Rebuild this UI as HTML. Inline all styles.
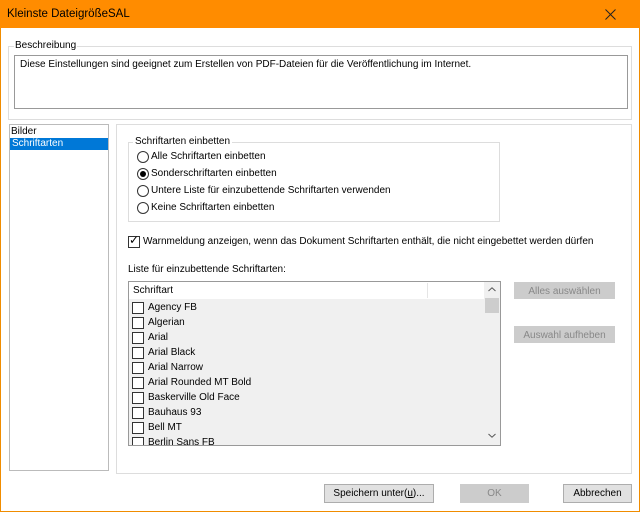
<!DOCTYPE html><html><head><style>
*{margin:0;padding:0;box-sizing:border-box}
body{width:640px;height:512px;position:relative;background:#fff;font-family:"Liberation Sans",sans-serif;font-size:10px;color:#000;overflow:hidden}
.a{position:absolute;white-space:nowrap}
.btn{position:absolute;border:1px solid #adadad;background:#e1e1e1;text-align:center;line-height:17px}
.dis{border-color:#ccc;background:#ccc;color:#888}
.rad{position:absolute;width:12px;height:12px;border:1px solid #333;border-radius:50%;background:#fff}
.cb{position:absolute;width:12px;height:12px;border:1px solid #333;background:#fff}
</style></head><body>
<div class="a" style="left:0;top:0;width:640px;height:512px;border:1px solid #f08c00"></div>
<div class="a" style="left:0;top:0;width:640px;height:28px;background:#ff8c00"></div>
<div class="a" style="left:7px;top:8px;font-size:11.5px">Kleinste DateigrößeSAL</div>
<svg class="a" style="left:605px;top:9px" width="11" height="11"><path d="M0.5 0.5L10.5 10.5M10.5 0.5L0.5 10.5" stroke="#222" stroke-width="1"/></svg>

<div class="a" style="left:8px;top:46px;width:624px;height:74px;border:1px solid #ddd"></div>
<div class="a" style="left:14px;top:40px;background:#fff;padding:0 1px">Beschreibung</div>
<div class="a" style="left:14px;top:55px;width:614px;height:54px;border:1px solid #999;padding:3px 5px">Diese Einstellungen sind geeignet zum Erstellen von PDF-Dateien für die Veröffentlichung im Internet.</div>

<div class="a" style="left:9px;top:124px;width:100px;height:347px;border:1px solid #bbb"></div>
<div class="a" style="left:11px;top:126px">Bilder</div>
<div class="a" style="left:10px;top:138px;width:98px;height:12px;background:#0078d7;color:#fff;padding-left:2px;line-height:12px">Schriftarten</div>

<div class="a" style="left:116px;top:124px;width:516px;height:350px;border:1px solid #ddd"></div>
<div class="a" style="left:128px;top:142px;width:372px;height:80px;border:1px solid #ddd"></div>
<div class="a" style="left:133px;top:136px;background:#fff;padding:0 2px">Schriftarten einbetten</div>
<div class="rad" style="left:137px;top:151px"></div><div class="a" style="left:151px;top:151px">Alle Schriftarten einbetten</div>
<div class="rad" style="left:137px;top:168px"></div><div class="a" style="left:140px;top:171px;width:6px;height:6px;border-radius:50%;background:#000"></div><div class="a" style="left:151px;top:168px">Sonderschriftarten einbetten</div>
<div class="rad" style="left:137px;top:185px"></div><div class="a" style="left:151px;top:185px">Untere Liste für einzubettende Schriftarten verwenden</div>
<div class="rad" style="left:137px;top:202px"></div><div class="a" style="left:151px;top:202px">Keine Schriftarten einbetten</div>

<div class="cb" style="left:128px;top:236px"></div><div class="a" style="left:129px;top:233px;font-size:12px">✓</div>
<div class="a" style="left:143px;top:236px">Warnmeldung anzeigen, wenn das Dokument Schriftarten enthält, die nicht eingebettet werden dürfen</div>
<div class="a" style="left:128px;top:264px">Liste für einzubettende Schriftarten:</div>

<div class="a" style="left:128px;top:281px;width:373px;height:165px;border:1px solid #999;background:#f0f0f0;overflow:hidden">
<div class="a" style="left:0;top:0;width:355px;height:17px;background:#fff"></div>
<div class="a" style="left:298px;top:1px;width:1px;height:15px;background:#e5e5e5"></div>
<div class="a" style="left:4px;top:3px">Schriftart</div>
<div class="a" style="left:355px;top:0;width:17px;height:163px;background:#f0f0f0"></div>
<div class="a" style="left:356px;top:16px;width:14px;height:15px;background:#cdcdcd"></div>
<svg class="a" style="left:359px;top:5px" width="8" height="5"><path d="M0.5 4L4 0.8L7.5 4" fill="none" stroke="#555"/></svg>
<svg class="a" style="left:359px;top:151px" width="8" height="5"><path d="M0.5 1L4 4.2L7.5 1" fill="none" stroke="#555"/></svg>
</div>
<div class="a" style="left:129px;top:301px;width:350px">
<div style="position:relative;height:150px">
<div class="cb" style="left:3px;top:1px"></div><div class="a" style="left:19px;top:1px">Agency FB</div>
<div class="cb" style="left:3px;top:16px"></div><div class="a" style="left:19px;top:16px">Algerian</div>
<div class="cb" style="left:3px;top:31px"></div><div class="a" style="left:19px;top:31px">Arial</div>
<div class="cb" style="left:3px;top:46px"></div><div class="a" style="left:19px;top:46px">Arial Black</div>
<div class="cb" style="left:3px;top:61px"></div><div class="a" style="left:19px;top:61px">Arial Narrow</div>
<div class="cb" style="left:3px;top:76px"></div><div class="a" style="left:19px;top:76px">Arial Rounded MT Bold</div>
<div class="cb" style="left:3px;top:91px"></div><div class="a" style="left:19px;top:91px">Baskerville Old Face</div>
<div class="cb" style="left:3px;top:106px"></div><div class="a" style="left:19px;top:106px">Bauhaus 93</div>
<div class="cb" style="left:3px;top:121px"></div><div class="a" style="left:19px;top:121px">Bell MT</div>
<div class="a" style="left:0;top:136px;width:350px;height:8px;overflow:hidden"><div class="cb" style="left:3px;top:0"></div><div class="a" style="left:19px;top:0">Berlin Sans FB</div></div>
</div></div>

<div class="btn dis" style="left:514px;top:282px;width:101px;height:17px">Alles auswählen</div>
<div class="btn dis" style="left:514px;top:326px;width:101px;height:17px">Auswahl aufheben</div>

<div class="btn" style="left:324px;top:484px;width:110px;height:19px">Speichern unter(<u>u</u>)...</div>
<div class="btn dis" style="left:460px;top:484px;width:69px;height:19px">OK</div>
<div class="btn" style="left:563px;top:484px;width:69px;height:19px">Abbrechen</div>
</body></html>
